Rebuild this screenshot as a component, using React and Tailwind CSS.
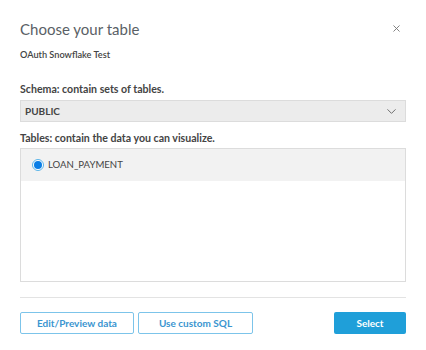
import { ChevronDown, X } from "lucide-react";

export default function App() {
  return (
    <div
      className="w-[426px] h-[350px] bg-white px-5 pt-[17px] text-[#333]"
      style={{ fontFamily: 'Lato, "Liberation Sans", sans-serif' }}
    >
      {/* Header */}
      <div className="flex items-start justify-between">
        <h2 className="text-[15px] leading-[24px] text-[#5a5f66]">Choose your table</h2>
        <button className="mt-[6px] mr-[4px] text-[#777]">
          <X size={11} strokeWidth={2} />
        </button>
      </div>
      <p className="mt-[7px] text-[9.2px] leading-[14px] font-semibold text-[#444]">
        OAuth Snowflake Test
      </p>

      {/* Schema */}
      <p className="mt-[20px] text-[10.6px] leading-[14px] font-bold text-[#444]">
        Schema: contain sets of tables.
      </p>
      <div className="mt-[4px] h-[22px] flex items-center justify-between bg-[#ececec] border border-[#dcdcdc] pl-[4px] pr-[6px]">
        <span className="text-[10px] font-bold text-[#444]">PUBLIC</span>
        <ChevronDown size={15} strokeWidth={1.5} className="text-[#666]" />
      </div>

      {/* Tables */}
      <p className="mt-[9px] text-[10.6px] leading-[14px] font-bold text-[#444]">
        Tables: contain the data you can visualize.
      </p>
      <div className="mt-[3px] h-[134px] border border-[#dcdcdc] bg-white">
        <div className="h-[32px] bg-[#f2f2f2] flex items-center pl-[11px] gap-[4px]">
          <span className="w-[12px] h-[12px] rounded-full border border-[#5ab4e8] bg-white flex items-center justify-center">
            <span className="w-[8px] h-[8px] rounded-full bg-[#0a7ee6]" />
          </span>
          <span className="text-[9.6px] text-[#444]">LOAN_PAYMENT</span>
        </div>
      </div>

      {/* Divider */}
      <div className="mt-[15px] border-t border-[#e3e3e3]" />

      {/* Footer */}
      <div className="mt-[14px] flex items-center justify-between">
        <div className="flex gap-[4px]">
          <button className="w-[114px] h-[22px] border border-[#7cc4ea] rounded-[2px] text-[10px] font-bold text-[#3a95d0]">
            Edit/Preview data
          </button>
          <button className="w-[115px] h-[22px] border border-[#7cc4ea] rounded-[2px] text-[10px] font-bold text-[#3a95d0]">
            Use custom SQL
          </button>
        </div>
        <button className="w-[72px] h-[22px] bg-[#1f9fd9] rounded-[2px] text-[10px] font-bold text-white">
          Select
        </button>
      </div>
    </div>
  );
}
